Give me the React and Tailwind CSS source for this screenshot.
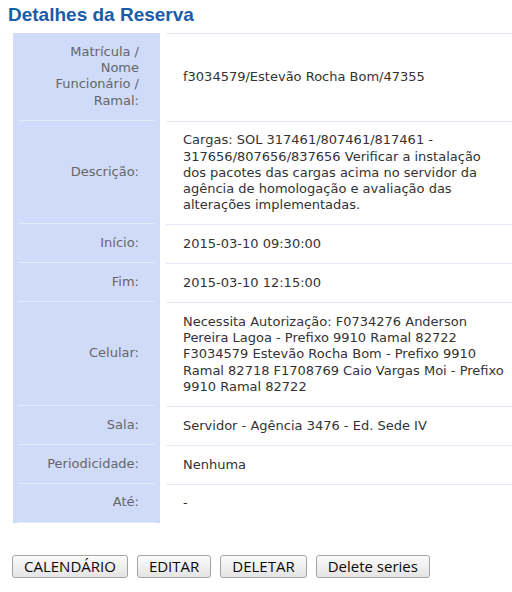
import React from "react";

const rows = [
  {
    label: ["Matrícula /", "Nome", "Funcionário /", "Ramal:"],
    value: "f3034579/Estevão Rocha Bom/47355",
  },
  {
    label: ["Descrição:"],
    value:
      "Cargas: SOL 317461/807461/817461 - 317656/807656/837656 Verificar a instalação dos pacotes das cargas acima no servidor da agência de homologação e avaliação das alterações implementadas.",
  },
  { label: ["Início:"], value: "2015-03-10 09:30:00" },
  { label: ["Fim:"], value: "2015-03-10 12:15:00" },
  {
    label: ["Celular:"],
    value:
      "Necessita Autorização: F0734276 Anderson Pereira Lagoa - Prefixo 9910 Ramal 82722 F3034579 Estevão Rocha Bom - Prefixo 9910 Ramal 82718 F1708769 Caio Vargas Moi - Prefixo 9910 Ramal 82722",
  },
  { label: ["Sala:"], value: "Servidor - Agência 3476 - Ed. Sede IV" },
  { label: ["Periodicidade:"], value: "Nenhuma" },
  { label: ["Até:"], value: "-" },
];

const buttons = ["CALENDÁRIO", "EDITAR", "DELETAR", "Delete series"];

const Row = ({ label, value }) => (
  <div className="flex">
    <div className="w-[147px] shrink-0 bg-[#d0dbfa] px-[5px]">
      <div className="flex h-full items-center justify-end border-b border-[#e3eafb] py-[10.8px] pr-[16px] text-right text-[#666]">
        <div>
          {label.map((l) => (
            <div key={l}>{l}</div>
          ))}
        </div>
      </div>
    </div>
    <div className="ml-[6px] flex w-[346px] shrink-0 items-center border-t border-[#e6ecf7] py-[10.8px] pl-[17px] pr-[7px] text-[#333]">
      <div>{value}</div>
    </div>
  </div>
);

export default function App() {
  return (
    <div className="h-[592px] w-[512px] overflow-hidden bg-white pl-[8px] pt-[4px] font-['DejaVu_Sans',sans-serif] text-[13px] leading-[16.25px]">
      <h2 className="font-['Liberation_Sans',Arial,sans-serif] text-[19px] font-bold leading-[22px] text-[#1a5ca8]">
        Detalhes da Reserva
      </h2>

      <div className="mt-[7px] ml-[5px] flex flex-col">
        {rows.map((r) => (
          <Row key={r.label.join(" ")} label={r.label} value={r.value} />
        ))}
      </div>

      <div className="mt-[32px] ml-[4px] flex gap-[9px]">
        {buttons.map((b) => (
          <button
            key={b}
            className="h-[23px] rounded-[3px] border border-[#a3a3a3] bg-gradient-to-b from-[#fbfbfb] to-[#e4e4e4] px-[11px] font-['Open_Sans',sans-serif] text-[15px] leading-[20px] text-[#0a0a0a] shadow-[inset_0_1px_0_#fff]"
          >
            {b}
          </button>
        ))}
      </div>
    </div>
  );
}
